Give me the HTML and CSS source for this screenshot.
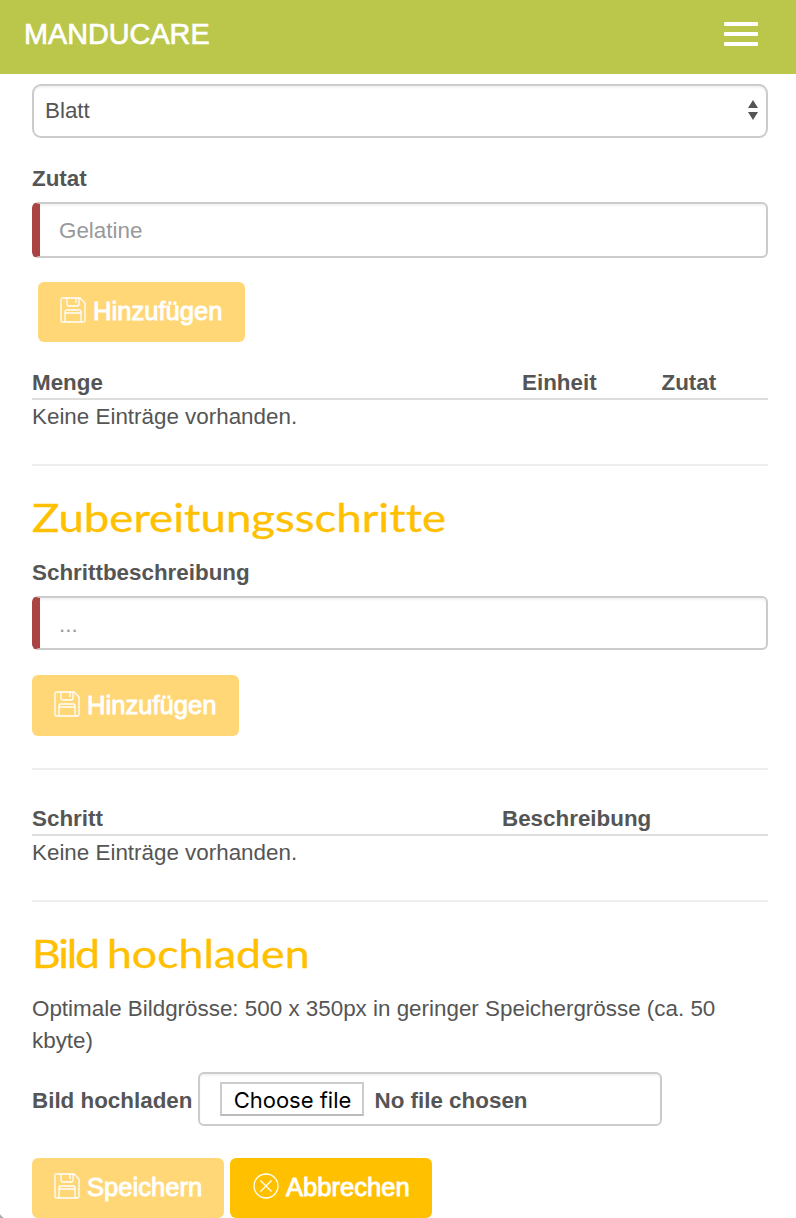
FILE: index.html
```html
<!DOCTYPE html>
<html lang="de">
<head>
<meta charset="utf-8">
<title>Manducare</title>
<link rel="stylesheet" href="styles.css">
</head>
<body>
<svg class="defs" width="0" height="0">
  <symbol id="save" viewBox="0 0 26 26">
    <path d="M2.500 1H20l5 5v17.500q0 1.500-1.500 1.500h-21Q1 25 1 23.500v-21Q1 1 2.500 1z M7 1v6q0 2 2 2h8q2 0 2-2V1 M16 1v5 M5 25V15q0-2 2-2h12q2 0 2 2v10 M5 16h16"/>
  </symbol>
  <symbol id="cancel" viewBox="0 0 26 26">
    <circle cx="13" cy="13" r="12"/><path d="M7.500 7.500l11 11M18.500 7.500l-11 11"/>
  </symbol>
</svg>
<header class="navbar">
  <span class="brand">MANDUCARE</span>
  <div class="toggle"><i></i><i></i><i></i></div>
</header>
<main class="content">
  <div class="field select"><span>Blatt</span>
    <svg width="10" height="20" viewBox="0 0 10 20"><path d="M0 8L5 0l5 8zM0 12h10l-5 8z"/></svg>
  </div>
  <div class="label label-zutat">Zutat</div>
  <div class="field required tall">Gelatine</div>
  <div class="btn faded add-ingredient"><svg class="icon"><use href="#save"/></svg><span>Hinzufügen</span></div>
  <div class="thead ingredients"><b>Menge</b><b>Einheit</b><b>Zutat</b></div>
  <div class="empty">Keine Einträge vorhanden.</div>
  <hr>
  <h2><span class="title title-steps">Zubereitungsschritte</span></h2>
  <div class="label">Schrittbeschreibung</div>
  <div class="field required dots">...</div>
  <div class="btn faded add-step"><svg class="icon"><use href="#save"/></svg><span>Hinzufügen</span></div>
  <hr>
  <div class="thead steps"><b>Schritt</b><b>Beschreibung</b></div>
  <div class="empty">Keine Einträge vorhanden.</div>
  <hr>
  <h2><span class="title title-image"><span class="tight">Bild </span>hochladen</span></h2>
  <p class="hint">Optimale Bildgrösse: 500 x 350px in geringer Speichergrösse (ca. 50 kbyte)</p>
  <div class="upload"><b>Bild hochladen</b>
    <div class="field file"><span class="choose">Choose file</span><b>No file chosen</b></div>
  </div>
  <div class="actions">
    <div class="btn faded save"><svg class="icon"><use href="#save"/></svg><span>Speichern</span></div>
    <div class="btn cancel"><svg class="icon"><use href="#cancel"/></svg><span>Abbrechen</span></div>
  </div>
</main>
<div class="corner"></div>
</body>
</html>
```
FILE: styles.css
```css
* { box-sizing: border-box; }
html, body { height: 1218px; overflow: hidden; }
body { margin: 0; background: #fff; color: #555; font: 22.4px/32px "Liberation Sans", Arial, sans-serif; position: relative; }
.defs { position: absolute; }
.navbar { height: 74px; background: #bbc74b; display: flex; justify-content: space-between; align-items: flex-start; padding: 18px 38px 0 24px; }
.brand { color: #fff; font-size: 28.800px; -webkit-text-stroke: .7px #fff; }
.toggle { display: flex; flex-direction: column; gap: 6px; padding-top: 4px; }
.toggle i { width: 34px; height: 4px; border-radius: 1px; background: #fff; }
.content { padding: 10px 28px 0 32px; }
.field { height: 54px; border: 2px solid #ccc; border-radius: 6px; background: #fff; box-shadow: inset 0 2px 2px rgba(0,0,0,.05); display: flex; align-items: center; }
.select { border-radius: 9px; justify-content: space-between; padding: 0 8px 0 11px; }
.select svg { fill: #555; margin-bottom: 3px; }
.label { font-weight: bold; height: 32px; margin-bottom: 8px; padding-top: 1px; }
.label-zutat { margin-top: 24px; }
.required { border-left: 8px solid #a94442; padding: 2px 0 0 19px; color: #999; }
.dots { padding-top: 4px; }
.tall { height: 56px; }
.btn { width: 207px; height: 60px; border-radius: 6px; background: #ffc000; color: #fff; font-size: 25.600px; display: flex; align-items: center; gap: 7px; padding: 0 0 2px 22px; white-space: nowrap; }
.btn span { -webkit-text-stroke: .9px #fff; }
.faded { background: #ffd777; }
.icon { width: 26px; height: 26px; flex: none; fill: none; stroke: #fff; stroke-width: 1.300; margin-bottom: 2px; }
.add-ingredient { margin: 24px 0 0 6px; }
.add-step { margin-top: 25px; height: 61px; }
.thead { display: grid; height: 34px; padding-top: 1px; border-bottom: 2px solid #ddd; }
.thead b { height: 31px; }
.ingredients { grid-template-columns: 490px 139.500px 1fr; margin-top: 24px; }
.steps { grid-template-columns: 470px 1fr; margin-top: 32px; }
.empty { height: 32px; padding-top: 1px; }
hr { margin: 32px 0 0; border: 0; height: 2px; background: #eee; }
h2 { margin: 29px 0 0; height: 61px; font: 38px/44px Lato, sans-serif; color: #ffc000; white-space: nowrap; }
.title { display: inline-block; transform-origin: left; font-variant-ligatures: none; -webkit-text-stroke: .3px #ffc000; }
.title-steps { transform: scaleX(1.200); }
.title-image { transform: scaleX(1.175); }
.tight { letter-spacing: -1.900px; }
.hint { margin: 0; height: 64px; padding-top: 1px; }
.upload { display: flex; align-items: center; gap: 6px; margin-top: 16px; white-space: nowrap; }
.upload b { padding-top: 3px; }
.file { width: 464px; padding-left: 20px; gap: 10px; }
.choose { width: 144px; height: 34px; border: 2px solid #ccc; border-bottom-color: #bbb; color: #000; font: 22px/32px Inter, sans-serif; text-align: center; }
.actions { display: flex; gap: 6px; margin-top: 32px; }
.save { width: 192px; }
.cancel { width: 202px; padding-left: 23px; }
.corner { position: absolute; left: 0; bottom: 0; width: 5px; height: 10px; background: radial-gradient(circle at 12px -2px, transparent 14px, #aaa 15px); }
```
